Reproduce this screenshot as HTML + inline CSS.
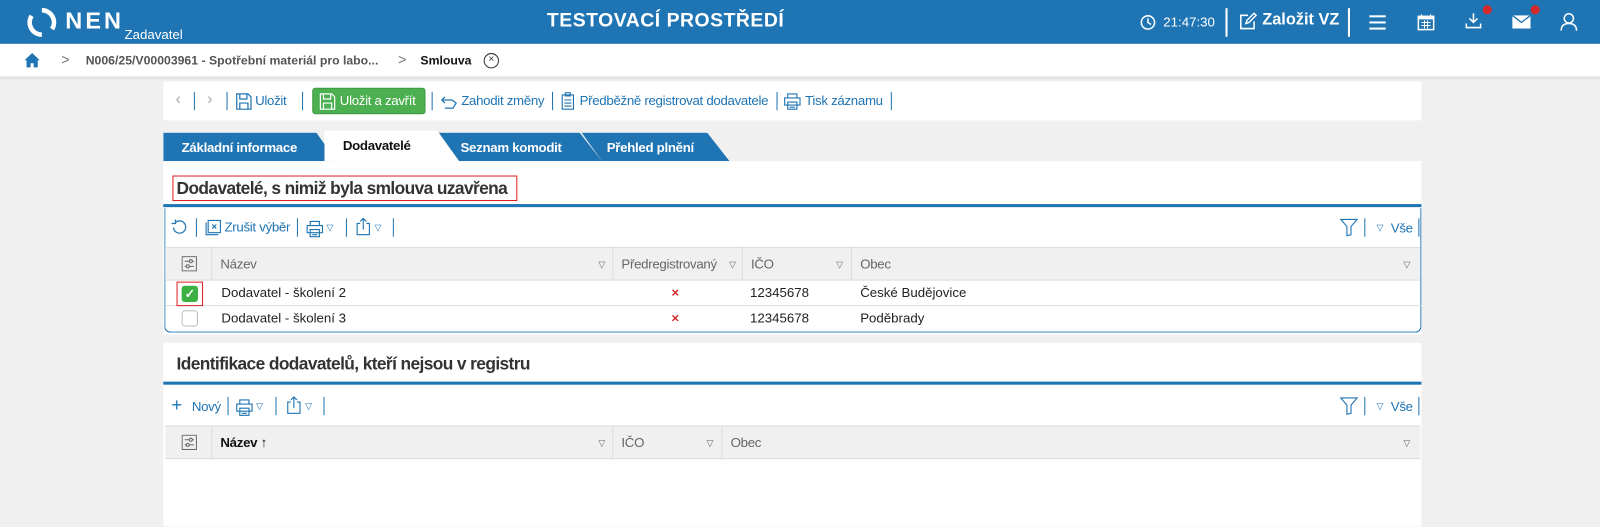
<!DOCTYPE html>
<html><head><meta charset="utf-8"><style>
*{box-sizing:border-box;margin:0;padding:0}
body{width:1600px;height:510px;overflow:hidden;background:#f0f0f0;font-family:"Liberation Sans",sans-serif;position:relative;color:#222}
#wrap{position:absolute;left:0;top:0;width:1568px;height:500px;transform:scale(1.0204);transform-origin:0 0}
.a{position:absolute}
.hdr{left:0;top:0;width:1600px;height:43px;background:#1f74b3;color:#fff}
.bc{left:0;top:43px;width:1600px;height:32px;background:#fff;box-shadow:0 2px 3px rgba(0,0,0,.12);font-size:12px;font-weight:bold;color:#555}
.w{background:#fff}
.blue{color:#1f74b3}
.t13{font-size:13px;letter-spacing:-0.3px}
.sep{width:1px;height:18px;background:#1f74b3}
.th{background:#f0f0f0;border-top:1px solid #ddd;border-bottom:1px solid #ddd;height:33px}
.col{position:absolute;top:0;height:32px;border-left:1px solid #ddd;font-size:13px;color:#666;line-height:32px;padding-left:8px;letter-spacing:-0.3px}
.tri{position:absolute;font-size:9px;color:#666}
.row{position:absolute;left:0;width:1231px;height:25px;border-bottom:1px solid #ddd;font-size:13px;line-height:24px}
.tab{position:absolute;top:130px;height:28px;background:#1f74b3;color:#fff;font-size:13px;font-weight:bold;line-height:30px;padding-left:18px;letter-spacing:-0.3px}
</style></head><body><div id="wrap">
<div class="a hdr">
  <svg class="a" style="left:26px;top:7px" width="30" height="30" viewBox="0 0 30 30"><path d="M15 3a12 12 0 0 1 10 18.5" stroke="#fff" stroke-width="4.5" fill="none"/><path d="M15 27A12 12 0 0 1 5 8.5" stroke="#fff" stroke-width="4.5" fill="none"/></svg>
  <div class="a" style="left:64px;top:7px;font-size:23px;font-weight:bold;letter-spacing:3px">NEN</div>
  <div class="a" style="left:122px;top:26px;font-size:13px">Zadavatel</div>
  <div class="a" style="left:536px;top:10px;font-size:19px;font-weight:bold;letter-spacing:.5px">TESTOVACÍ PROSTŘEDÍ</div>
  <svg class="a" style="left:1117px;top:14px" width="16" height="16" viewBox="0 0 16 16"><circle cx="8" cy="8" r="6.5" stroke="#fff" stroke-width="1.5" fill="none"/><path d="M8 4v4l3 2" stroke="#fff" stroke-width="1.5" fill="none"/></svg>
  <div class="a" style="left:1140px;top:14px;font-size:13px">21:47:30</div>
  <div class="a" style="left:1201px;top:8px;width:2px;height:28px;background:#fff"></div>
  <svg class="a" style="left:1214px;top:12px" width="18" height="18" viewBox="0 0 18 18"><path d="M9 3H2v13h13V9" stroke="#fff" stroke-width="1.5" fill="none"/><path d="M7 11l1-3 7-7 2 2-7 7z" stroke="#fff" stroke-width="1.4" fill="none"/></svg>
  <div class="a" style="left:1237px;top:11px;font-size:16px;font-weight:bold">Založit VZ</div>
  <div class="a" style="left:1321px;top:8px;width:2px;height:28px;background:#fff"></div>
  <div class="a" style="left:1342px;top:15px;width:16px;height:2px;background:#fff;box-shadow:0 6px 0 #fff,0 12px 0 #fff"></div>
  <svg class="a" style="left:1389px;top:13px" width="17" height="17" viewBox="0 0 17 17"><rect x="1" y="3" width="15" height="13" fill="none" stroke="#fff" stroke-width="1.5"/><rect x="1" y="3" width="15" height="3" fill="#fff"/><path d="M4 1v3M13 1v3M4 9h9M4 12h9M7 7v8M10 7v8" stroke="#fff"/></svg>
  <svg class="a" style="left:1435px;top:12px" width="18" height="17" viewBox="0 0 18 17"><path d="M9 1v9M5 6l4 4 4-4M2 11v4h14v-4" stroke="#fff" stroke-width="1.5" fill="none"/></svg>
  <div class="a" style="left:1453px;top:5px;width:9px;height:9px;border-radius:50%;background:#d42a2a"></div>
  <svg class="a" style="left:1482px;top:15px" width="18" height="13" viewBox="0 0 18 13"><rect x="0" y="0" width="18" height="13" fill="#fff"/><path d="M0 0l9 7 9-7" stroke="#1f74b3" stroke-width="1.3" fill="none"/></svg>
  <div class="a" style="left:1500px;top:5px;width:9px;height:9px;border-radius:50%;background:#d42a2a"></div>
  <svg class="a" style="left:1529px;top:12px" width="17" height="19" viewBox="0 0 17 19"><circle cx="8.5" cy="6" r="4.5" stroke="#fff" stroke-width="1.5" fill="none"/><path d="M1 18c0-5 3-7 7.5-7s7.5 2 7.5 7" stroke="#fff" stroke-width="1.5" fill="none"/></svg>
</div>
<div class="a bc">
  <svg class="a" style="left:23px;top:8px" width="17" height="16" viewBox="0 0 17 16"><path d="M8.5 1L1 8h2v7h4v-4h3v4h4V8h2z" fill="#1f74b3"/></svg>
  <div class="a" style="left:60px;top:7px;color:#777;font-weight:normal;font-size:14px">&gt;</div>
  <div class="a" style="left:84px;top:9px">N006/25/V00003961 - Spotřební materiál pro labo...</div>
  <div class="a" style="left:390px;top:7px;color:#777;font-weight:normal;font-size:14px">&gt;</div>
  <div class="a" style="left:412px;top:9px;color:#111">Smlouva</div>
  <div class="a" style="left:474px;top:9px;width:15px;height:15px;border:1.3px solid #333;border-radius:50%;font-size:10px;line-height:12px;text-align:center;color:#333;font-weight:normal">×</div>
</div>
<!-- toolbar -->
<div class="a w" style="left:160px;top:80px;width:1233px;height:38px"></div>
<div class="a t13" style="left:172px;top:89px;color:#aaa;font-size:16px">‹</div>
<div class="a sep" style="left:190px;top:90px"></div>
<div class="a t13" style="left:203px;top:89px;color:#aaa;font-size:16px">›</div>
<div class="a sep" style="left:222px;top:90px"></div>
<svg class="a" style="left:231px;top:91px" width="16" height="17" viewBox="0 0 16 17"><path d="M1 1h11l3 3v12H1z M4 1v5h7V1 M4 16v-6h8v6" stroke="#1f74b3" stroke-width="1.2" fill="none"/></svg>
<div class="a t13 blue" style="left:250px;top:91px">Uložit</div>
<div class="a sep" style="left:296px;top:90px"></div>
<div class="a" style="left:306px;top:86px;width:111px;height:26px;background:#4caf50;border-radius:3px;border:1px solid #3d9a40"></div>
<svg class="a" style="left:313px;top:91px" width="16" height="17" viewBox="0 0 16 17"><path d="M1 1h11l3 3v12H1z M4 1v5h7V1 M4 16v-6h8v6" stroke="#fff" stroke-width="1.2" fill="none"/></svg>
<div class="a t13" style="left:333px;top:91px;color:#fff">Uložit a zavřít</div>
<div class="a sep" style="left:423px;top:90px"></div>
<svg class="a" style="left:431px;top:93px" width="18" height="14" viewBox="0 0 18 14"><path d="M2 5h10l4 3-3 5H5 M5 2L2 5l3 3" stroke="#1f74b3" stroke-width="1.2" fill="none"/></svg>
<div class="a t13 blue" style="left:452px;top:91px">Zahodit změny</div>
<div class="a sep" style="left:541px;top:90px"></div>
<svg class="a" style="left:550px;top:90px" width="13" height="18" viewBox="0 0 13 18"><path d="M1 3h11v14H1z M4 1h5v3H4z M3 8h7M3 11h7M3 14h7" stroke="#1f74b3" stroke-width="1.1" fill="none"/></svg>
<div class="a t13 blue" style="left:568px;top:91px">Předběžně registrovat dodavatele</div>
<div class="a sep" style="left:761px;top:90px"></div>
<svg class="a" style="left:768px;top:91px" width="17" height="17" viewBox="0 0 17 17"><path d="M4 1h9v4H4z M1 5h15v7H1z M4 9h9v7H4z M6 12h5M6 14h5" stroke="#1f74b3" stroke-width="1.1" fill="none"/></svg>
<div class="a t13 blue" style="left:789px;top:91px">Tisk záznamu</div>
<div class="a sep" style="left:873px;top:90px"></div>
<!-- tabs -->
<div class="tab" style="left:160px;width:170px;clip-path:polygon(0 0,150px 0,170px 100%,0 100%)">Základní informace</div>
<div class="tab" style="left:430px;width:160px;clip-path:polygon(0 0,138px 0,160px 100%,20px 100%,0 0)">&nbsp;Seznam komodit</div>
<div class="tab" style="left:570px;width:145px;clip-path:polygon(0 0,123px 0,145px 100%,20px 100%,0 0)">&nbsp;&nbsp;Přehled plnění</div>
<div class="tab" style="left:318px;width:132px;top:128px;height:30px;background:#fff;color:#111;clip-path:polygon(0 0,110px 0,132px 100%,0 100%)">Dodavatelé</div>
<!-- section 1 -->
<div class="a w" style="left:160px;top:158px;width:1233px;height:170px"></div>
<div class="a" style="left:169px;top:172px;width:338px;height:25px;border:1px solid #e02020"></div>
<div class="a" style="left:173px;top:175px;font-size:17px;font-weight:bold;color:#333;letter-spacing:-0.6px">Dodavatelé, s nimiž byla smlouva uzavřena</div>
<div class="a" style="left:160px;top:200px;width:1233px;height:3px;background:#1f74b3"></div>
<div class="a" style="left:161px;top:204px;width:1232px;height:122px;border:1px solid #1f74b3;border-top:none;border-radius:0 0 6px 6px"></div>
<svg class="a" style="left:168px;top:215px" width="16" height="16" viewBox="0 0 16 16"><path d="M4 3a6 6 0 1 1-2 5 M4 0v4H0" stroke="#1f74b3" stroke-width="1.2" fill="none"/></svg>
<div class="a sep" style="left:192px;top:214px"></div>
<svg class="a" style="left:201px;top:215px" width="16" height="16" viewBox="0 0 16 16"><path d="M1 3v12h12 M3 1h12v12H3z M7 5l4 4M11 5l-4 4" stroke="#1f74b3" stroke-width="1.1" fill="none"/></svg>
<div class="a t13 blue" style="left:220px;top:215px">Zrušit výběr</div>
<div class="a sep" style="left:291px;top:214px"></div>
<svg class="a" style="left:300px;top:216px" width="17" height="17" viewBox="0 0 17 17"><path d="M4 1h9v4H4z M1 5h15v7H1z M4 9h9v7H4z M6 12h5M6 14h5" stroke="#1f74b3" stroke-width="1.1" fill="none"/></svg>
<div class="a blue" style="left:320px;top:218px;font-size:9px">▽</div>
<div class="a sep" style="left:339px;top:214px"></div>
<svg class="a" style="left:348px;top:213px" width="16" height="18" viewBox="0 0 16 18"><path d="M5 6H2v11h12V6h-3 M8 12V1M5 4l3-3 3 3" stroke="#1f74b3" stroke-width="1.1" fill="none"/></svg>
<div class="a blue" style="left:367px;top:218px;font-size:9px">▽</div>
<div class="a sep" style="left:385px;top:214px"></div>
<svg class="a" style="left:1313px;top:214px" width="18" height="18" viewBox="0 0 18 18"><path d="M1 1h16l-6 7v8l-4 1V8z" stroke="#1f74b3" stroke-width="1.1" fill="none"/></svg>
<div class="a sep" style="left:1337px;top:214px"></div>
<div class="a blue" style="left:1349px;top:218px;font-size:9px">▽</div>
<div class="a t13 blue" style="left:1363px;top:216px">Vše</div>
<div class="a sep" style="left:1390px;top:214px"></div>
<div class="a" style="left:162px;top:242px;width:1230px">
  <div class="th" style="position:relative;width:1230px">
    <svg class="a" style="left:16px;top:8px" width="15" height="15" viewBox="0 0 15 15"><rect x=".5" y=".5" width="14" height="14" fill="none" stroke="#666"/><path d="M3 5h9M3 10h9" stroke="#666"/><circle cx="9" cy="5" r="1.5" fill="#f0f0f0" stroke="#666"/><circle cx="6" cy="10" r="1.5" fill="#f0f0f0" stroke="#666"/></svg>
    <div class="col" style="left:45px;width:394px">Název<span class="tri" style="right:8px">▽</span></div>
    <div class="col" style="left:438px;width:127px">Předregistrovaný<span class="tri" style="right:6px">▽</span></div>
    <div class="col" style="left:565px;width:107px">IČO<span class="tri" style="right:8px">▽</span></div>
    <div class="col" style="left:672px;width:558px">Obec<span class="tri" style="right:10px">▽</span></div>
  </div>
  <div class="row" style="top:33px">
    <div class="a" style="left:11px;top:1px;width:26px;height:24px;border:1px solid #e02020"></div>
    <div class="a" style="left:16px;top:5px;width:16px;height:16px;border-radius:3px;background:#3cb043;color:#fff;font-size:12px;line-height:16px;text-align:center;font-weight:bold">✓</div>
    <div class="a" style="left:55px;top:0">Dodavatel - školení 2</div>
    <div class="a" style="left:496px;top:0;color:#d42a2a;font-weight:bold">×</div>
    <div class="a" style="left:573px;top:0">12345678</div>
    <div class="a" style="left:681px;top:0">České Budějovice</div>
  </div>
  <div class="row" style="top:58px;border-bottom:none">
    <div class="a" style="left:16px;top:4px;width:16px;height:16px;border-radius:3px;border:1px solid #bbb"></div>
    <div class="a" style="left:55px;top:0">Dodavatel - školení 3</div>
    <div class="a" style="left:496px;top:0;color:#d42a2a;font-weight:bold">×</div>
    <div class="a" style="left:573px;top:0">12345678</div>
    <div class="a" style="left:681px;top:0">Poděbrady</div>
  </div>
</div>
<!-- section 2 -->
<div class="a w" style="left:160px;top:336px;width:1233px;height:180px"></div>
<div class="a" style="left:173px;top:347px;font-size:17px;font-weight:bold;color:#333;letter-spacing:-0.6px">Identifikace dodavatelů, kteří nejsou v registru</div>
<div class="a" style="left:160px;top:374px;width:1233px;height:3px;background:#1f74b3"></div>
<div class="a blue" style="left:168px;top:387px;font-size:18px">+</div>
<div class="a t13 blue" style="left:188px;top:391px">Nový</div>
<div class="a sep" style="left:223px;top:389px"></div>
<svg class="a" style="left:231px;top:391px" width="17" height="17" viewBox="0 0 17 17"><path d="M4 1h9v4H4z M1 5h15v7H1z M4 9h9v7H4z M6 12h5M6 14h5" stroke="#1f74b3" stroke-width="1.1" fill="none"/></svg>
<div class="a blue" style="left:251px;top:393px;font-size:9px">▽</div>
<div class="a sep" style="left:270px;top:389px"></div>
<svg class="a" style="left:280px;top:388px" width="16" height="18" viewBox="0 0 16 18"><path d="M5 6H2v11h12V6h-3 M8 12V1M5 4l3-3 3 3" stroke="#1f74b3" stroke-width="1.1" fill="none"/></svg>
<div class="a blue" style="left:299px;top:393px;font-size:9px">▽</div>
<div class="a sep" style="left:317px;top:389px"></div>
<svg class="a" style="left:1313px;top:389px" width="18" height="18" viewBox="0 0 18 18"><path d="M1 1h16l-6 7v8l-4 1V8z" stroke="#1f74b3" stroke-width="1.1" fill="none"/></svg>
<div class="a sep" style="left:1337px;top:389px"></div>
<div class="a blue" style="left:1349px;top:393px;font-size:9px">▽</div>
<div class="a t13 blue" style="left:1363px;top:391px">Vše</div>
<div class="a sep" style="left:1390px;top:389px"></div>
<div class="a th" style="left:162px;top:417px;width:1230px">
  <svg class="a" style="left:16px;top:8px" width="15" height="15" viewBox="0 0 15 15"><rect x=".5" y=".5" width="14" height="14" fill="none" stroke="#666"/><path d="M3 5h9M3 10h9" stroke="#666"/><circle cx="9" cy="5" r="1.5" fill="#f0f0f0" stroke="#666"/><circle cx="6" cy="10" r="1.5" fill="#f0f0f0" stroke="#666"/></svg>
  <div class="col" style="left:45px;width:394px;color:#111;font-weight:bold">Název ↑<span class="tri" style="right:8px;font-weight:normal">▽</span></div>
  <div class="col" style="left:438px;width:107px">IČO<span class="tri" style="right:8px">▽</span></div>
  <div class="col" style="left:545px;width:685px">Obec<span class="tri" style="right:10px">▽</span></div>
</div>
</div></body></html>
